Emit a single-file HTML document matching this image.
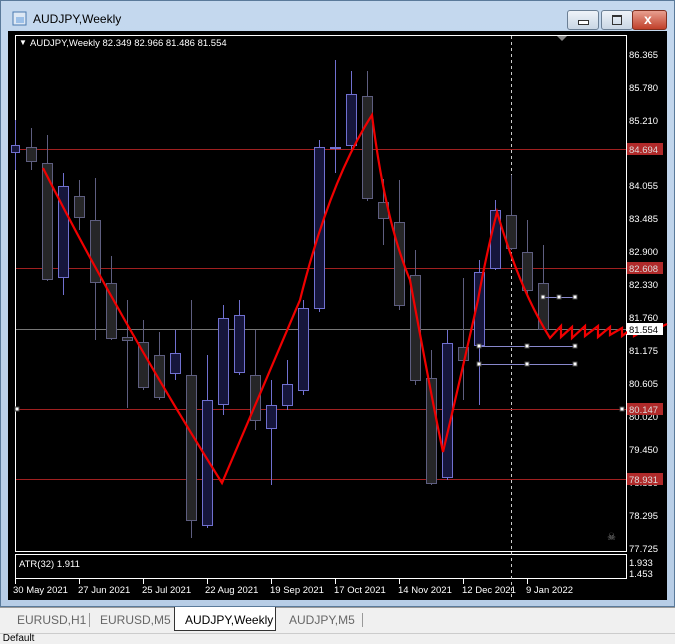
<!DOCTYPE html>
<html><head><meta charset="utf-8"><style>
body{margin:0;width:675px;height:641px;overflow:hidden;background:#f0f0f0;font-family:"Liberation Sans",sans-serif;position:relative}
.frame{position:absolute;left:0;top:0;width:675px;height:607px;background:linear-gradient(#c4d8ee,#b7cde6);border:1px solid #5a7a9a;box-sizing:border-box}
.title{position:absolute;left:32px;top:11px;font-size:12px;color:#000}
.btn{position:absolute;top:9px;height:18px;border:1px solid #6b7f95;border-radius:3px;background:linear-gradient(#eef3f9,#c9d6e4)}
.chart{position:absolute;left:8px;top:31px;width:659px;height:569px;background:#000}
.tabs{position:absolute;left:0;top:607px;width:675px;height:25px;background:#f0f0f0;border-top:1px solid #999}
.tab{position:absolute;top:5px;font-size:12px;color:#666}
</style></head><body>
<div class="frame">
<svg style="position:absolute;left:11px;top:10px" width="16" height="16"><rect x="1" y="1" width="13" height="13" fill="#dde8f4" stroke="#4a7ab0"/><rect x="4" y="6" width="8" height="6" fill="#9cc0e8"/></svg>
<div class="title">AUDJPY,Weekly</div>
<div class="btn" style="left:566px;width:30px"><div style="position:absolute;left:10px;top:9px;width:9px;height:3px;border:1px solid #333;background:#fff"></div></div>
<div class="btn" style="left:600px;width:30px"><div style="position:absolute;left:10px;top:4px;width:8px;height:7px;border:1px solid #333;border-top-width:2px"></div></div>
<div class="btn" style="left:631px;width:33px;background:linear-gradient(#e8a090,#c0402a);border-color:#803020"><div style="position:absolute;left:11px;top:0;color:#fff;font-weight:bold;font-size:14px">x</div></div>
</div>
<div class="chart"></div>
<svg style="position:absolute;left:0;top:0" width="675" height="607" font-family="Liberation Sans,sans-serif" font-size="9.5">
<rect x="15.5" y="35.5" width="611" height="516" fill="none" stroke="#fff"/>
<rect x="15.5" y="554.5" width="611" height="24" fill="none" stroke="#fff"/>
<line x1="511.5" y1="36" x2="511.5" y2="598" stroke="#ccc" stroke-dasharray="3,3"/>
<polygon points="557,36 567,36 562,41" fill="#888"/>
<g stroke="#a02020" stroke-width="1"><line x1="16" y1="149.5" x2="626" y2="149.5"/><line x1="16" y1="268.5" x2="626" y2="268.5"/><line x1="16" y1="409.5" x2="626" y2="409.5"/><line x1="16" y1="479.5" x2="626" y2="479.5"/></g>
<line x1="16" y1="329.5" x2="626" y2="329.5" stroke="#777"/>
<g stroke-width="1">
<g stroke="#7070d0" fill="#16163c">
<line x1="15.5" y1="120" x2="15.5" y2="170"/><rect x="11.5" y="145.5" width="8" height="7"/>
<line x1="63.5" y1="173" x2="63.5" y2="295"/><rect x="58.5" y="186.5" width="10" height="91"/>
<line x1="175.5" y1="330" x2="175.5" y2="380"/><rect x="170.5" y="353.5" width="10" height="20"/>
<line x1="207.5" y1="355" x2="207.5" y2="528"/><rect x="202.5" y="400.5" width="10" height="125"/>
<line x1="223.5" y1="305" x2="223.5" y2="415"/><rect x="218.5" y="318.5" width="10" height="86"/>
<line x1="239.5" y1="300" x2="239.5" y2="375"/><rect x="234.5" y="315.5" width="10" height="57"/>
<line x1="271.5" y1="380" x2="271.5" y2="485"/><rect x="266.5" y="405.5" width="10" height="23"/>
<line x1="287.5" y1="360" x2="287.5" y2="410"/><rect x="282.5" y="384.5" width="10" height="21"/>
<line x1="303.5" y1="300" x2="303.5" y2="395"/><rect x="298.5" y="308.5" width="10" height="82"/>
<line x1="319.5" y1="140" x2="319.5" y2="312"/><rect x="314.5" y="147.5" width="10" height="161"/>
<line x1="335.5" y1="60" x2="335.5" y2="173"/><rect x="330.5" y="147.5" width="10" height="1"/>
<line x1="351.5" y1="71" x2="351.5" y2="150"/><rect x="346.5" y="94.5" width="10" height="51"/>
<line x1="447.5" y1="330" x2="447.5" y2="480"/><rect x="442.5" y="343.5" width="10" height="134"/>
<line x1="479.5" y1="260" x2="479.5" y2="405"/><rect x="474.5" y="272.5" width="10" height="73"/>
<line x1="495.5" y1="200" x2="495.5" y2="270"/><rect x="490.5" y="210.5" width="10" height="58"/>
</g>
<g stroke="#5e5e80" fill="#262628">
<line x1="31.5" y1="128" x2="31.5" y2="170"/><rect x="26.5" y="147.5" width="10" height="14"/>
<line x1="47.5" y1="135" x2="47.5" y2="281"/><rect x="42.5" y="163.5" width="10" height="116"/>
<line x1="79.5" y1="180" x2="79.5" y2="230"/><rect x="74.5" y="196.5" width="10" height="21"/>
<line x1="95.5" y1="178" x2="95.5" y2="340"/><rect x="90.5" y="220.5" width="10" height="62"/>
<line x1="111.5" y1="256" x2="111.5" y2="340"/><rect x="106.5" y="283.5" width="10" height="55"/>
<line x1="127.5" y1="300" x2="127.5" y2="408"/><rect x="122.5" y="337.5" width="10" height="3"/>
<line x1="143.5" y1="320" x2="143.5" y2="390"/><rect x="138.5" y="342.5" width="10" height="45"/>
<line x1="159.5" y1="332" x2="159.5" y2="400"/><rect x="154.5" y="355.5" width="10" height="42"/>
<line x1="191.5" y1="300" x2="191.5" y2="538"/><rect x="186.5" y="375.5" width="10" height="145"/>
<line x1="255.5" y1="330" x2="255.5" y2="430"/><rect x="250.5" y="375.5" width="10" height="45"/>
<line x1="367.5" y1="71" x2="367.5" y2="201"/><rect x="362.5" y="96.5" width="10" height="102"/>
<line x1="383.5" y1="179" x2="383.5" y2="245"/><rect x="378.5" y="202.5" width="10" height="16"/>
<line x1="399.5" y1="180" x2="399.5" y2="310"/><rect x="394.5" y="222.5" width="10" height="83"/>
<line x1="415.5" y1="250" x2="415.5" y2="385"/><rect x="410.5" y="275.5" width="10" height="105"/>
<line x1="431.5" y1="350" x2="431.5" y2="485"/><rect x="426.5" y="378.5" width="10" height="105"/>
<line x1="463.5" y1="278" x2="463.5" y2="400"/><rect x="458.5" y="347.5" width="10" height="13"/>
<line x1="511.5" y1="175" x2="511.5" y2="250"/><rect x="506.5" y="215.5" width="10" height="33"/>
<line x1="527.5" y1="220" x2="527.5" y2="295"/><rect x="522.5" y="252.5" width="10" height="38"/>
<line x1="543.5" y1="245" x2="543.5" y2="330"/><rect x="538.5" y="283.5" width="10" height="46"/>
</g></g>
<g stroke="#8888cc"><line x1="543" y1="297.5" x2="575" y2="297.5"/><line x1="479" y1="346.5" x2="575" y2="346.5"/><line x1="479" y1="364.5" x2="575" y2="364.5"/></g>
<g fill="#fff" stroke="#444"><rect x="541" y="295" width="4" height="4"/><rect x="557" y="295" width="4" height="4"/><rect x="573" y="295" width="4" height="4"/><rect x="477" y="344" width="4" height="4"/><rect x="525" y="344" width="4" height="4"/><rect x="573" y="344" width="4" height="4"/><rect x="477" y="362" width="4" height="4"/><rect x="525" y="362" width="4" height="4"/><rect x="573" y="362" width="4" height="4"/><rect x="15" y="407" width="4" height="4"/><rect x="620" y="407" width="4" height="4"/></g>
<path d="M43,168 Q120,320 222,483 L300,300 Q330,180 372,115 Q385,220 410,280 Q432,400 443,452 Q460,380 478,300 Q485,260 497,212 Q520,290 550,338 L561,326 L561,337 L572,327 L572,338 L585,326 L585,336 L598,326 L598,337 L610,327 L610,335 L622,328 L622,336 L634,327 L634,336 L648,328 L648,333 L667,324" fill="none" stroke="#f00000" stroke-width="2.2"/>
<g fill="#fff"><text x="19" y="45" font-size="8">▼</text><text x="30" y="46">AUDJPY,Weekly  82.349 82.966 81.486 81.554</text>
<text x="19" y="567">ATR(32) 1.911</text></g>
<g fill="#fff">
<text x="629" y="58">86.365</text><text x="629" y="91">85.780</text><text x="629" y="124">85.210</text><text x="629" y="189">84.055</text><text x="629" y="222">83.485</text><text x="629" y="255">82.900</text><text x="629" y="288">82.330</text><text x="629" y="321">81.760</text><text x="629" y="354">81.175</text><text x="629" y="387">80.605</text><text x="629" y="420">80.020</text><text x="629" y="453">79.450</text><text x="629" y="486">78.880</text><text x="629" y="519">78.295</text><text x="629" y="552">77.725</text>
<text x="629" y="566">1.933</text><text x="629" y="577">1.453</text></g>
<g fill="#b02a2a"><rect x="627" y="143" width="36" height="12"/><rect x="627" y="262" width="36" height="12"/><rect x="627" y="403" width="36" height="12"/><rect x="627" y="473" width="36" height="12"/></g>
<rect x="627" y="323" width="36" height="12" fill="#fff"/>
<g fill="#ddd"><text x="629" y="153">84.694</text><text x="629" y="272">82.608</text><text x="629" y="413">80.147</text><text x="629" y="483">78.931</text></g>
<text x="629" y="333" fill="#000">81.554</text>
<g stroke="#fff"><line x1="15.5" y1="579" x2="15.5" y2="584"/><line x1="79.5" y1="579" x2="79.5" y2="584"/><line x1="143.5" y1="579" x2="143.5" y2="584"/><line x1="207.5" y1="579" x2="207.5" y2="584"/><line x1="271.5" y1="579" x2="271.5" y2="584"/><line x1="335.5" y1="579" x2="335.5" y2="584"/><line x1="399.5" y1="579" x2="399.5" y2="584"/><line x1="463.5" y1="579" x2="463.5" y2="584"/><line x1="527.5" y1="579" x2="527.5" y2="584"/></g>
<g fill="#fff"><text x="13" y="593">30 May 2021</text><text x="78" y="593">27 Jun 2021</text><text x="142" y="593">25 Jul 2021</text><text x="205" y="593">22 Aug 2021</text><text x="270" y="593">19 Sep 2021</text><text x="334" y="593">17 Oct 2021</text><text x="398" y="593">14 Nov 2021</text><text x="462" y="593">12 Dec 2021</text><text x="526" y="593">9 Jan 2022</text></g>
<text x="607" y="540" fill="#888" font-size="10">☠</text>
</svg>
<div class="tabs">
<div class="tab" style="left:17px">EURUSD,H1</div>
<div style="position:absolute;left:89px;top:5px;height:14px;border-left:1px solid #999"></div>
<div class="tab" style="left:100px">EURUSD,M5</div>
<div style="position:absolute;left:174px;top:-1px;width:100px;height:23px;background:#fff;border:1px solid #333;border-top:none"></div>
<div class="tab" style="left:185px;color:#000">AUDJPY,Weekly</div>
<div class="tab" style="left:289px">AUDJPY,M5</div>
<div style="position:absolute;left:362px;top:5px;height:14px;border-left:1px solid #999"></div>
</div>
<div style="position:absolute;left:0;top:633px;width:675px;height:8px;background:#f0f0f0;border-top:1px solid #ccc;font-size:10px;color:#000;line-height:10px">&nbsp;Default</div>
</body></html>
